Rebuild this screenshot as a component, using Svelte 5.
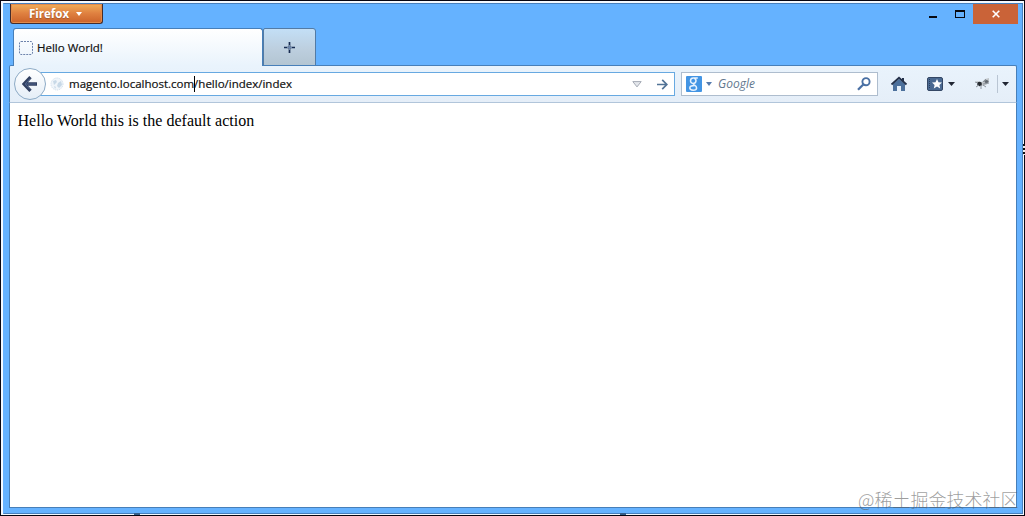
<script lang="ts">
  let title = "Hello World!";
  let host = "magento.localhost.com";
  let path = "/hello/index/index";
  let query = "";
</script>

<div class="desktop">
  <div class="window">
    <header>
      <button class="menu">Firefox <i class="caret"></i></button>
      <div class="controls">
        <svg width="50" height="20" viewBox="923 4 50 20" shape-rendering="crispEdges">
          <path d="M929 16h8v2h-8z" fill="#080a12" />
          <path d="M955 10h10v8h-10zM956 12v5h8v-5z" fill="#080a12" fill-rule="evenodd" />
        </svg>
        <button class="close" aria-label="Close">
          <svg width="8" height="8" viewBox="0 0 8 8">
            <path d="M.7 .7l6.6 6.6M7.3 .7L.7 7.3" stroke="#fff" stroke-width="1.6" />
          </svg>
        </button>
      </div>
    </header>

    <nav class="tabs">
      <div class="tab">
        <svg width="14" height="14" viewBox="0 0 14 14">
          <rect x=".5" y=".5" width="13" height="13" rx="1.5" fill="none" stroke="#6d83ab" stroke-dasharray="2 1" />
        </svg>
        <span>{title}</span>
      </div>
      <button class="new-tab" aria-label="New tab">
        <svg width="11" height="11" viewBox="0 0 11 11">
          <path d="M5.5 0v11M0 5.5h11" stroke="#172b50" stroke-width="1.7" />
          <path d="M5.5 3v5M3 5.5h5" stroke="#6d87ad" stroke-width="1" />
        </svg>
      </button>
    </nav>

    <div class="toolbar">
      <button class="back" aria-label="Back">
        <svg width="16" height="16" viewBox="0 0 16 16">
          <path d="M8.5 1.2L2 8l6.5 6.8M2.4 8H15" fill="none" stroke="#303f60" stroke-width="3.3" />
          <path d="M8 2.7L3 8l5 5.3M4 8h10" fill="none" stroke="#4f658d" stroke-width="1" />
        </svg>
      </button>
      <div class="url">
        <svg class="globe" width="14" height="14" viewBox="0 0 14 14">
          <circle cx="7" cy="7" r="6" fill="#f0f5fa" stroke="#cbdbea" stroke-dasharray="1 1" />
          <path d="M3 4l3-1 1 2-3 3zM8 6l3-2 1 4-3 3-2-2zM4 9l2 1-1 2z" fill="#c8d9e7" />
        </svg>
        <span class="address">{host}<i class="cursor"></i>{path}</span>
        <svg class="drop" width="10" height="7" viewBox="0 0 10 7">
          <path d="M.8 .6h8.4L5 5.9z" fill="#e4e7ec" stroke="#a5abb5" />
        </svg>
        <svg width="11" height="11" viewBox="0 0 11 11">
          <path d="M0 5.5h9.5M5.2 .9l4.6 4.6-4.6 4.6" fill="none" stroke="#527396" stroke-width="1.7" />
        </svg>
      </div>
      <div class="search">
        <svg width="16" height="16" viewBox="0 0 16 16">
          <rect width="16" height="16" rx="1" fill="#4395e4" />
          <path d="M11.8 2H7.3C3.6 2 3.7 7.4 7 7.4c3.7 0 3.8-4.2 1.2-5.2M7.8 7.3c-1.8 1.6 2.8 1.9 2.8 4.6 0 3.1-6.8 2.9-6.8.2 0-1.8 2-2.5 4.7-2.5" fill="none" stroke="#e8f3ff" stroke-width="1.5" />
        </svg>
        <svg class="pick" width="6" height="4" viewBox="0 0 6 4"><path d="M0 0h6L3 4z" fill="#557bae" /></svg>
        <input placeholder="Google" bind:value={query} />
        <svg width="14" height="14" viewBox="0 0 14 14">
          <circle cx="9" cy="4.7" r="3.6" fill="none" stroke="#4a70a4" stroke-width="1.9" />
          <path d="M6.3 7.5L1 12.7" stroke="#4a70a4" stroke-width="2.3" />
        </svg>
      </div>
      <svg class="tools" width="137" height="30" viewBox="878 69 137 30">
        <path d="M893 84l6-5 6 5v7h-4v-5h-4v5h-4z" fill="#4c709c" />
        <path d="M891.5 84.5l7.5-6.7 7.5 6.7" fill="none" stroke="#24314a" stroke-width="1.8" />
        <path d="M902 78h2v3h-2z" fill="#24314a" />
        <rect x="927.5" y="77.5" width="15" height="13" rx="1.5" fill="#4a6991" stroke="#344765" />
        <path d="M929.5 79v10" stroke="#263c60" stroke-dasharray="1 1" />
        <path d="M937 79l1.5 3.2 3.5.3-2.6 2.4.8 3.5-3.2-1.8-3.2 1.8.8-3.5-2.6-2.4 3.5-.3z" fill="#fff" />
        <path d="M948 82h7l-3.5 4z" fill="#202633" />
        <path d="M976 81l6 1 3-3 4-1v4l-3 3-5 1-3-2z" fill="#c0c5c9" />
        <ellipse cx="979.5" cy="84" rx="2.4" ry="2.2" fill="#262a30" />
        <ellipse cx="986.5" cy="81.5" rx="2" ry="1.5" fill="#626970" />
        <path d="M975 82l3 1M976 87l3-2M981 89v-4M983 82l3-3M983 84l6-1M986 87l-3-2" stroke="#8c949c" stroke-width="1" />
        <path d="M997.5 75v18" stroke="#b9c5d3" />
        <path d="M1002 82h7l-3.5 4z" fill="#202633" />
      </svg>
    </div>

    <main>Hello World this is the default action</main>
  </div>
  <i class="mark first"></i>
  <i class="mark second"></i>
  <i class="edge"></i>
  <span class="watermark">@稀土掘金技术社区</span>
</div>

<style>
  :global(body) {
    margin: 0;
    overflow: hidden;
  }

  .desktop {
    position: relative;
    box-sizing: border-box;
    width: 1025px;
    height: 516px;
    padding: 2px 1px 1px 2px;
    border: 1px solid #080510;
    background: #f4f9ff;
  }

  .window {
    box-sizing: border-box;
    width: 1020px;
    height: 511px;
    display: flex;
    flex-direction: column;
    padding: 0 5px 5px 6px;
    border: 1px solid #477fbc;
    border-left-color: #65b2ff;
    background: #65b2ff;
  }

  button {
    border: 0;
    padding: 0;
    display: flex;
    align-items: center;
    justify-content: center;
  }

  svg {
    display: block;
    flex: none;
  }

  header {
    height: 24px;
    display: flex;
    justify-content: space-between;
    flex: none;
  }

  .menu {
    box-sizing: border-box;
    width: 93px;
    height: 20px;
    gap: 7px;
    padding-right: 2px;
    color: #fff;
    font: bold 11.5px "Open Sans", sans-serif;
    border: 1px solid #442c2c;
    border-top: 0;
    border-radius: 0 0 3px 3px;
    background: linear-gradient(#f0ad59, #df8040 50%, #cb6229);
    box-shadow: inset 0 0 0 1px #e28a49;
    text-shadow: 0 1px 1px #9c5932;
  }

  .caret {
    border: 3.5px solid transparent;
    border-top: 4px solid #fff;
    border-bottom: 0;
  }

  .controls {
    display: flex;
  }

  .close {
    width: 45px;
    height: 20px;
    margin-right: -1px;
    background: #ca6338;
  }

  .tabs {
    display: flex;
    align-items: flex-start;
    height: 37px;
    margin-left: 3px;
    flex: none;
  }

  .tab {
    position: relative;
    z-index: 1;
    box-sizing: border-box;
    width: 250px;
    height: 38px;
    display: flex;
    align-items: center;
    gap: 4px;
    padding-left: 5px;
    border: 1px solid #477fb9;
    border-bottom: 0;
    border-radius: 3px 3px 0 0;
    background: linear-gradient(#fff, #e9f3fc);
    color: #101010;
    font: 11.5px "Open Sans", sans-serif;
    -webkit-text-stroke: 0.2px;
  }

  .tab span {
    margin-top: -1px;
  }

  .new-tab {
    box-sizing: border-box;
    width: 53px;
    height: 38px;
    border: 1px solid #537ba5;
    border-radius: 2px 3px 0 0;
    background: linear-gradient(#c3dff6, #bdcfdf 55%, #b3c5d2);
  }

  .toolbar {
    box-sizing: border-box;
    height: 38px;
    width: 1008px;
    margin-left: -1px;
    display: flex;
    align-items: center;
    flex: none;
    padding: 0 1px 0 4px;
    border: 1px solid #477fb9;
    border-bottom-color: #b1c5da;
    border-radius: 2px 2px 0 0;
    background: linear-gradient(#e9f3fc, #e5eef8);
  }

  .back {
    position: relative;
    z-index: 1;
    box-sizing: border-box;
    width: 32px;
    height: 32px;
    flex: none;
    border: 1px solid #8dabc6;
    border-radius: 50%;
    background: linear-gradient(#fff, #e5eef7);
  }

  .url,
  .search {
    box-sizing: border-box;
    height: 24px;
    display: flex;
    align-items: center;
    flex: none;
    background: #fff;
  }

  .url {
    width: 636px;
    margin-left: -7px;
    padding: 0 6px 0 10px;
    border: 1px solid #67a9e1;
  }

  .address {
    flex: 1;
    margin-left: 5px;
    font: 11.5px "Open Sans", sans-serif;
    color: #101010;
    white-space: nowrap;
    -webkit-text-stroke: 0.2px;
  }

  .cursor {
    display: inline-block;
    width: 1px;
    height: 16px;
    margin-right: -1px;
    vertical-align: -4px;
    background: #000;
  }

  .drop {
    margin-right: 15px;
  }

  .search {
    width: 197px;
    margin-left: 6px;
    padding: 0 6px 0 4px;
    border: 1px solid #aebdce;
  }

  .pick {
    margin: 0 6px 0 4px;
  }

  .search input {
    flex: 1;
    min-width: 0;
    border: 0;
    padding: 0 0 2px;
    outline: 0;
    background: none;
    font: italic 12px "Open Sans", sans-serif;
  }

  .search input::placeholder {
    color: #63788f;
    opacity: 1;
  }

  .tools {
    margin-left: 0;
  }

  main {
    box-sizing: border-box;
    width: 1008px;
    margin-left: -1px;
    flex: 1;
    padding: 9px 7.5px;
    border: 1px solid #477fb9;
    border-top: 0;
    background: #fff;
    color: #000;
    font: 16px/18px "Liberation Serif", serif;
    letter-spacing: 0.03px;
  }

  .mark {
    position: absolute;
    bottom: 0;
    width: 6px;
    height: 2px;
    background: #345d89;
  }

  .first {
    left: 133px;
  }

  .second {
    left: 619px;
  }

  .edge {
    position: absolute;
    right: -1px;
    top: 143px;
    width: 2px;
    height: 11px;
    background: repeating-linear-gradient(#111 0 2px, #eee 2px 4px);
  }

  .watermark {
    position: absolute;
    left: 857px;
    top: 485px;
    color: rgba(90, 90, 90, 0.6);
    font: 300 18px/26px "Noto Sans CJK SC", sans-serif;
    white-space: nowrap;
  }
</style>
